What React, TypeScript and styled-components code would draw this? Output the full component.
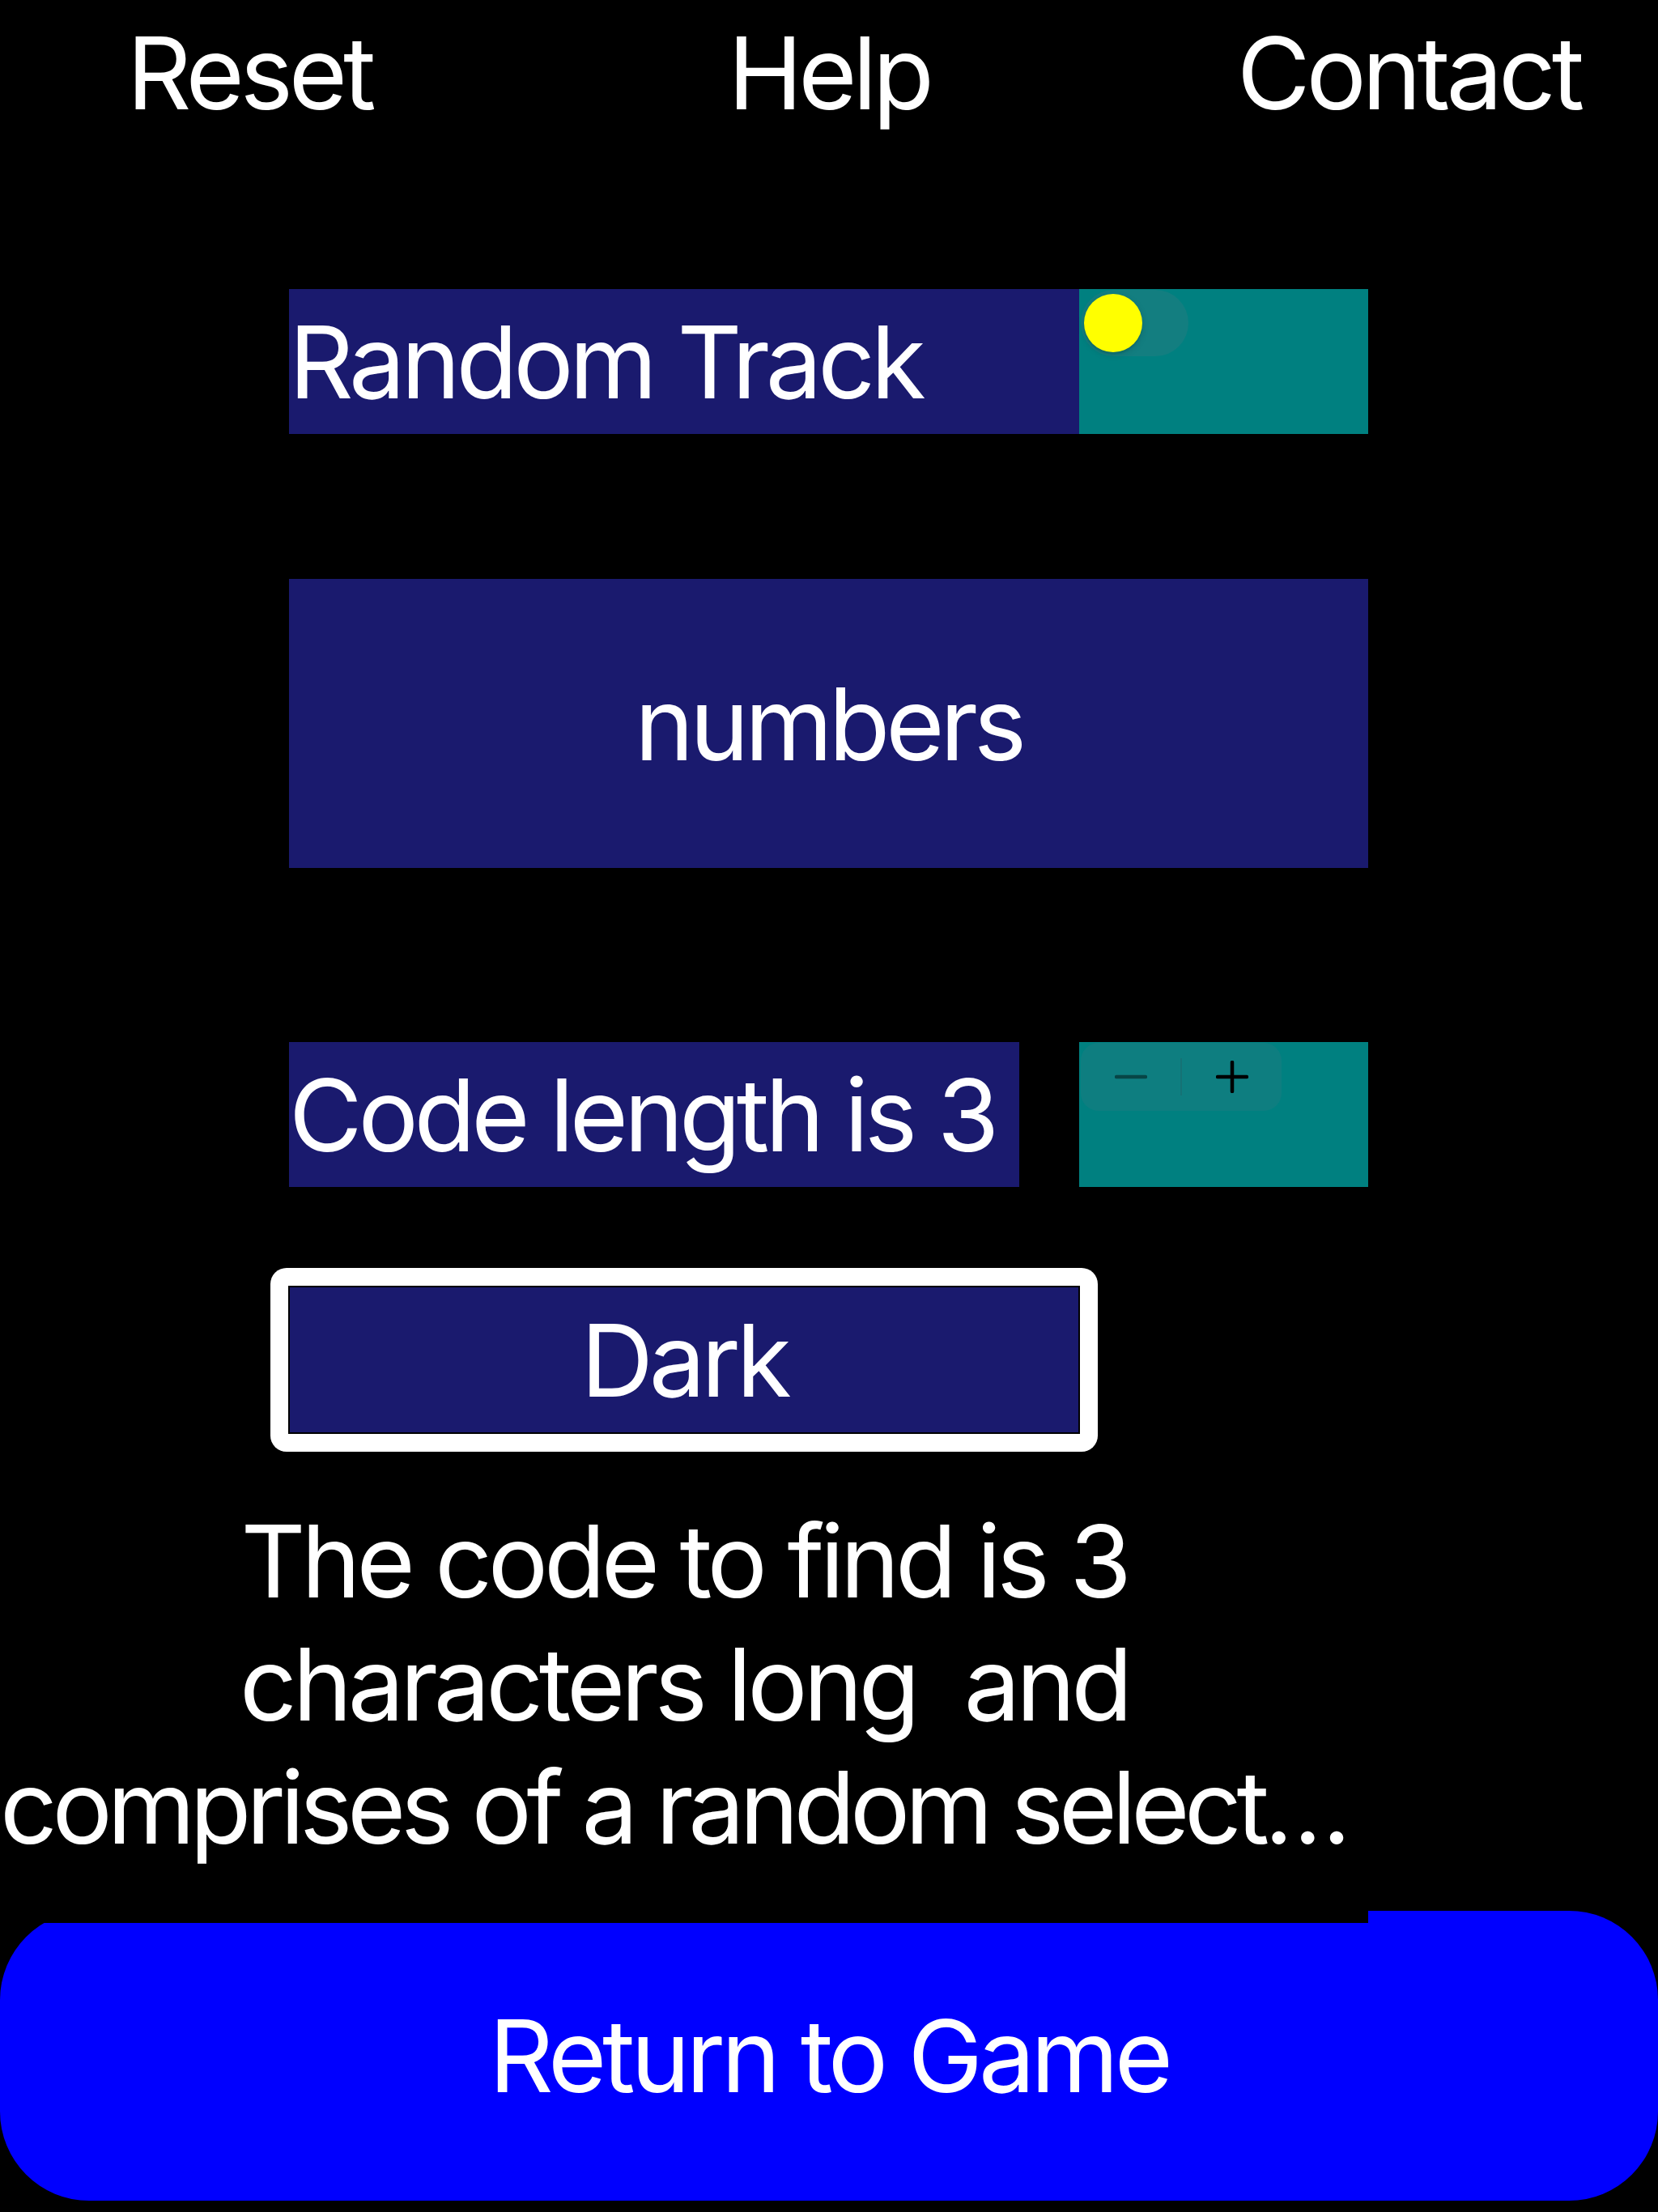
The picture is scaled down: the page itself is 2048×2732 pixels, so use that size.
import React from 'react';
import styled, { createGlobalStyle, css } from 'styled-components';

const navy = '#1a1a6e';
const teal = '#008080';

const bigText = css`
  font-family: Inter, 'Noto Sans', sans-serif;
  font-size: 124px;
  letter-spacing: -5.2px;
  color: #fff;
`;

const GlobalStyle = createGlobalStyle`
  html, body {
    margin: 0;
    padding: 0;
    background: #000;
  }

  body {
    font-family: Inter, 'Noto Sans', sans-serif;
    color: #fff;
  }
`;

const Page = styled.div`
  display: flex;
  flex-direction: column;
  width: 2048px;
  min-height: 2732px;
  background: #000;
`;

const Nav = styled.nav`
  display: flex;
  justify-content: center;
  gap: 116px;
  padding-top: 15px;
`;

const NavItem = styled.a`
  ${bigText};
  width: 600px;
  line-height: 151px;
  text-align: center;
  text-decoration: none;
`;

const Content = styled.div`
  display: flex;
  flex-direction: column;
  width: 1690px;
`;

const Row = styled.div<{ $top: number; $spread?: boolean }>`
  display: flex;
  justify-content: ${props => (props.$spread ? 'space-between' : 'flex-start')};
  height: 179px;
  margin: ${props => props.$top}px 0 0 357px;
`;

const Label = styled.div<{ $grow?: boolean }>`
  ${bigText};
  display: flex;
  align-items: center;
  flex: ${props => (props.$grow ? '1' : '0 0 auto')};
  padding-right: ${props => (props.$grow ? '0' : '30px')};
  background: ${navy};
  white-space: nowrap;
`;

const ControlBox = styled.div`
  display: flex;
  align-items: flex-start;
  width: 357px;
  padding: 1px 2px;
  box-sizing: border-box;
  background: ${teal};
`;

const Track = styled.div`
  display: flex;
  align-items: center;
  width: 133px;
  height: 82px;
  padding-left: 4px;
  box-sizing: border-box;
  border-radius: 41px;
  background: rgba(120, 120, 128, 0.16);
`;

const Knob = styled.div`
  width: 72px;
  height: 72px;
  border-radius: 50%;
  background: #ffff00;
  box-shadow: 0 3px 8px rgba(0, 0, 0, 0.15), 0 3px 1px rgba(0, 0, 0, 0.06);
`;

const Stepper = styled.div`
  display: flex;
  align-items: center;
  width: 248px;
  height: 84px;
  border-radius: 22px;
  background: rgba(118, 118, 128, 0.12);
`;

const StepButton = styled.button<{ $disabled?: boolean }>`
  display: flex;
  align-items: center;
  justify-content: center;
  flex: 1;
  height: 100%;
  padding: 0;
  border: none;
  background: transparent;
  color: ${props => (props.$disabled ? 'rgba(0, 0, 0, 0.45)' : '#000')};
`;

const Divider = styled.div`
  width: 2px;
  height: 46px;
  background: rgba(60, 60, 67, 0.18);
`;

const WideBox = styled.div`
  ${bigText};
  display: flex;
  align-items: center;
  justify-content: center;
  height: 357px;
  margin: 179px 0 0 357px;
  background: ${navy};
`;

const DarkFrame = styled.button`
  align-self: center;
  margin-top: 100px;
  padding: 22px;
  border: none;
  border-radius: 20px;
  background: #fff;
`;

const DarkInner = styled.div`
  ${bigText};
  display: flex;
  align-items: center;
  justify-content: center;
  width: 974px;
  height: 179px;
  border: 2px solid #000;
  background: ${navy};
`;

const About = styled.div`
  ${bigText};
  position: relative;
  z-index: 1;
  padding: 59px 0 67px;
  background: #000;
  line-height: 152px;
  text-align: center;
`;

const Line = styled.div<{ $tight?: boolean }>`
  letter-spacing: ${props => (props.$tight ? '-6.4px' : 'inherit')};
  white-space: pre;
  overflow: hidden;
  text-overflow: ellipsis;
`;

const ReturnButton = styled.button`
  ${bigText};
  display: flex;
  align-items: center;
  justify-content: center;
  width: 2048px;
  height: 358px;
  margin-top: -15px;
  border: none;
  border-radius: 110px;
  background: #0000ff;
`;

const Minus = () => (
  <svg width="40" height="8" viewBox="0 0 40 8">
    <line x1="2" y1="4" x2="38" y2="4" stroke="currentColor" strokeWidth="4.5" strokeLinecap="round" />
  </svg>
);

const Plus = () => (
  <svg width="40" height="40" viewBox="0 0 40 40">
    <line x1="2" y1="20" x2="38" y2="20" stroke="currentColor" strokeWidth="4.5" strokeLinecap="round" />
    <line x1="20" y1="2" x2="20" y2="38" stroke="currentColor" strokeWidth="4.5" strokeLinecap="round" />
  </svg>
);

const App: React.FC = function() {
  return (
    <Page>
      <GlobalStyle />
      <Nav>
        <NavItem>Reset</NavItem>
        <NavItem>Help</NavItem>
        <NavItem>Contact</NavItem>
      </Nav>
      <Content>
        <Row $top={191}>
          <Label $grow>Random Track</Label>
          <ControlBox>
            <Track>
              <Knob />
            </Track>
          </ControlBox>
        </Row>
        <WideBox>numbers</WideBox>
        <Row $top={215} $spread>
          <Label>Code length is 3</Label>
          <ControlBox>
            <Stepper>
              <StepButton $disabled>
                <Minus />
              </StepButton>
              <Divider />
              <StepButton>
                <Plus />
              </StepButton>
            </Stepper>
          </ControlBox>
        </Row>
        <DarkFrame>
          <DarkInner>Dark</DarkInner>
        </DarkFrame>
        <About>
          <Line>The code to find is 3</Line>
          <Line>characters long  and</Line>
          <Line $tight>comprises of a random selection of numbers</Line>
        </About>
      </Content>
      <ReturnButton>Return to Game</ReturnButton>
    </Page>
  );
};

export default App;
